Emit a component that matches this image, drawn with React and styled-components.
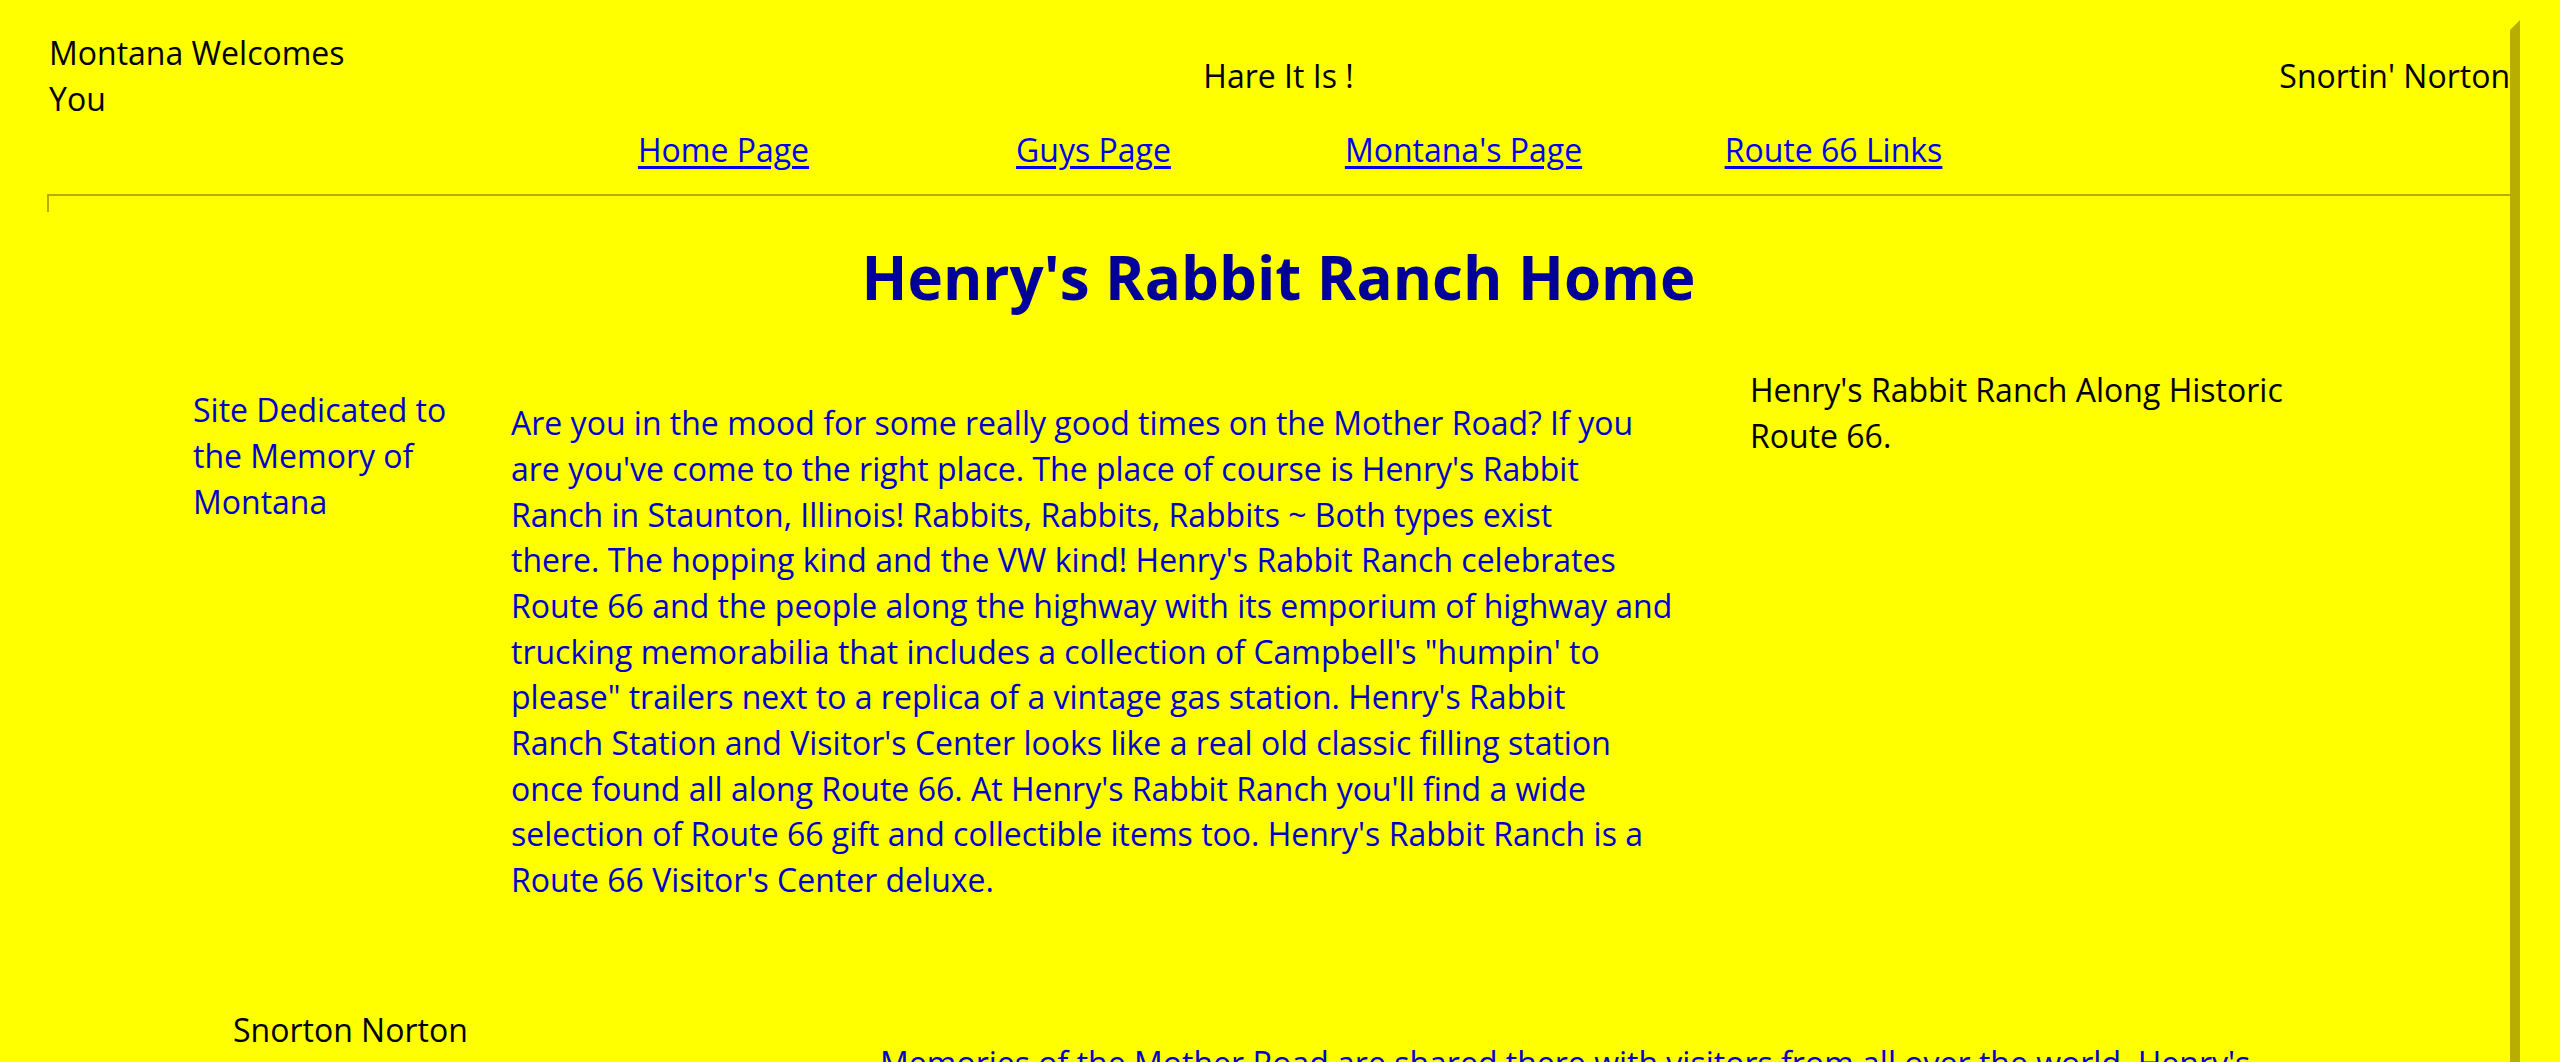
import React from "react";
import styled, { createGlobalStyle } from "styled-components";

const GlobalStyle = createGlobalStyle`
  html, body {
    margin: 0;
    background: #ffff00;
  }
  body {
    font-family: "Comic Sans MS", "Open Sans", sans-serif;
    font-size: 32px;
    line-height: 45.7px;
    color: #000;
  }
`;

// outset table look: light top/left, dark olive right/bottom
const Frame = styled.div`
  margin: 20px 40px 0 30px;
  border: 10px solid;
  border-color: #ffff00 #b8ae00 #b8ae00 #ffff00;
  padding: 0 0 60px 7px;
`;

const TopRow = styled.div`
  display: grid;
  grid-template-columns: 1fr 1fr 1fr;
  align-items: center;
`;

const TopCell = styled.div`
  text-align: ${(p) => p.align || "left"};
  padding-left: ${(p) => (p.align === "left" ? "2px" : "0")};
`;

const Welcome = styled.div`
  max-width: 320px;
`;

const Nav = styled.nav`
  display: grid;
  grid-template-columns: repeat(4, 370px);
  justify-content: center;
  margin-top: 6px;
`;

const NavLink = styled.a`
  text-align: center;
  color: #0000ee;
  text-decoration: underline;
  text-underline-offset: 4px;
`;

const Rule = styled.hr`
  box-sizing: border-box;
  margin: 21px 0 0;
  height: 18px;
  border-style: solid;
  border-width: 2px 0 0 2px;
  border-color: #b8ae00;
`;

const Title = styled.h1`
  margin: 30px 0 0;
  text-align: center;
  font-size: 60px;
  line-height: 70px;
  font-weight: 700;
  color: #000099;
`;

const Columns = styled.div`
  display: grid;
  grid-template-columns: ${(p) => p.cols};
  padding-left: ${(p) => p.indent}px;
  margin-top: ${(p) => p.top}px;
  align-items: start;
`;

const Col = styled.div`
  margin-top: ${(p) => p.offset || 0}px;
  color: ${(p) => (p.blue ? "#0000cc" : "#000")};
  white-space: ${(p) => (p.nowrap ? "nowrap" : "normal")};
`;

const Lines = ({ lines }) =>
  lines.map((line, i) => (
    <React.Fragment key={i}>
      {line}
      {i < lines.length - 1 && <br />}
    </React.Fragment>
  ));

const links = ["Home Page", "Guys Page", "Montana's Page", "Route 66 Links"];

const intro = [
  "Are you in the mood for some really good times on the Mother Road? If you",
  "are you've come to the right place. The place of course is Henry's Rabbit",
  "Ranch in Staunton, Illinois! Rabbits, Rabbits, Rabbits ~ Both types exist",
  "there. The hopping kind and the VW kind! Henry's Rabbit Ranch celebrates",
  "Route 66 and the people along the highway with its emporium of highway and",
  "trucking memorabilia that includes a collection of Campbell's \"humpin' to",
  "please\" trailers next to a replica of a vintage gas station. Henry's Rabbit",
  "Ranch Station and Visitor's Center looks like a real old classic filling station",
  "once found all along Route 66. At Henry's Rabbit Ranch you'll find a wide",
  "selection of Route 66 gift and collectible items too. Henry's Rabbit Ranch is a",
  "Route 66 Visitor's Center deluxe.",
];

export default function App() {
  return (
    <>
      <GlobalStyle />
      <Frame>
        <TopRow>
          <TopCell align="left">
            <Welcome>Montana Welcomes You</Welcome>
          </TopCell>
          <TopCell align="center">Hare It Is !</TopCell>
          <TopCell align="right">Snortin' Norton</TopCell>
        </TopRow>
        <Nav>
          {links.map((l) => (
            <NavLink key={l} href="#">
              {l}
            </NavLink>
          ))}
        </Nav>
        <Rule />
        <Title>Henry's Rabbit Ranch Home</Title>
        <Columns cols="318px 1239px auto" indent={146} top={55}>
          <Col blue offset={20}>
            <Lines lines={["Site Dedicated to", "the Memory of", "Montana"]} />
          </Col>
          <Col blue nowrap offset={33}>
            <Lines lines={intro} />
          </Col>
          <Col>
            <Lines lines={["Henry's Rabbit Ranch Along Historic", "Route 66."]} />
          </Col>
        </Columns>
        <Columns cols="647px auto" indent={186} top={104}>
          <Col>Snorton Norton</Col>
          <Col blue nowrap offset={33}>
            Memories of the Mother Road are shared there with visitors from all over the world. Henry's
          </Col>
        </Columns>
      </Frame>
    </>
  );
}
